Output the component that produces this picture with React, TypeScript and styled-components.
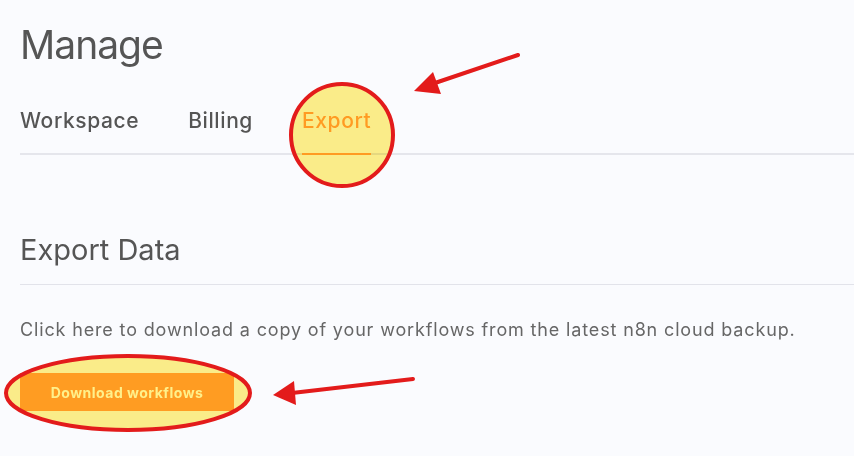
import React from "react";
import styled, { createGlobalStyle } from "styled-components";

const GlobalStyle = createGlobalStyle`
  html, body {
    margin: 0;
    padding: 0;
    background: #fafbfe;
  }
  body {
    font-family: Inter, "Liberation Sans", sans-serif;
    color: #555;
  }
`;

const Page = styled.div`
  position: relative;
  width: 854px;
  height: 456px;
  overflow: hidden;
  padding: 22px 0 0 20px;
  box-sizing: border-box;
`;

const Title = styled.h1`
  margin: 0;
  font-size: 39px;
  font-weight: 400;
  letter-spacing: -1px;
  line-height: 46px;
  color: #555;
`;

const Tabs = styled.div`
  display: flex;
  gap: 49px;
  margin-top: 41px;
  border-bottom: 2px solid #e5e6ec;
`;

const Tab = styled.div<{ $active?: boolean }>`
  font-size: 21px;
  font-weight: 500;
  letter-spacing: 0.6px;
  line-height: 24px;
  padding-bottom: 20px;
  margin-bottom: -2px;
  color: ${(p) => (p.$active ? "#ffa53f" : "#555")};
  border-bottom: 2px solid ${(p) => (p.$active ? "#ffa53f" : "transparent")};
`;

const Section = styled.section`
  margin-top: 78px;
`;

const SectionTitle = styled.h2`
  margin: 0;
  font-size: 29px;
  font-weight: 400;
  line-height: 34px;
  padding-bottom: 17px;
  border-bottom: 1px solid #e2e3ea;
  color: #555;
`;

const Text = styled.p`
  margin: 33px 0 0;
  font-size: 18px;
  letter-spacing: 0.85px;
  line-height: 24px;
  color: #666;
`;

const Button = styled.button`
  margin-top: 31px;
  width: 214px;
  height: 38px;
  border: none;
  background: #ffa63e;
  color: #fff;
  font-family: Inter, "Liberation Sans", sans-serif;
  font-size: 14px;
  font-weight: 700;
  letter-spacing: 0.5px;
  cursor: pointer;
`;

const Marks = styled.svg`
  position: absolute;
  left: 0;
  top: 0;
  width: 854px;
  height: 456px;
  pointer-events: none;
`;

const Highlight = styled.g`
  mix-blend-mode: multiply;
`;

export default function App() {
  return (
    <>
      <GlobalStyle />
      <Page>
        <Title>Manage</Title>
        <Tabs>
          <Tab>Workspace</Tab>
          <Tab>Billing</Tab>
          <Tab $active>Export</Tab>
        </Tabs>
        <Section>
          <SectionTitle>Export Data</SectionTitle>
          <Text>
            Click here to download a copy of your workflows from the latest n8n cloud backup.
          </Text>
          <Button>Download workflows</Button>
        </Section>
        <Marks viewBox="0 0 854 456">
          <Highlight>
            <circle cx="342" cy="135" r="51" fill="#fff08a" />
            <ellipse cx="128" cy="393" rx="122" ry="37" fill="#fff08a" />
          </Highlight>
          <circle cx="342" cy="135" r="51" fill="none" stroke="#e31b1b" strokeWidth="4" />
          <ellipse cx="128" cy="393" rx="122" ry="37" fill="none" stroke="#e31b1b" strokeWidth="4" />
          <line x1="518" y1="55" x2="432" y2="84" stroke="#e31b1b" strokeWidth="4" strokeLinecap="round" />
          <polygon points="414,91 433,72 441,94" fill="#e31b1b" />
          <line x1="413" y1="379" x2="292" y2="393" stroke="#e31b1b" strokeWidth="4" strokeLinecap="round" />
          <polygon points="273,395 294,381 296,405" fill="#e31b1b" />
        </Marks>
      </Page>
    </>
  );
}
